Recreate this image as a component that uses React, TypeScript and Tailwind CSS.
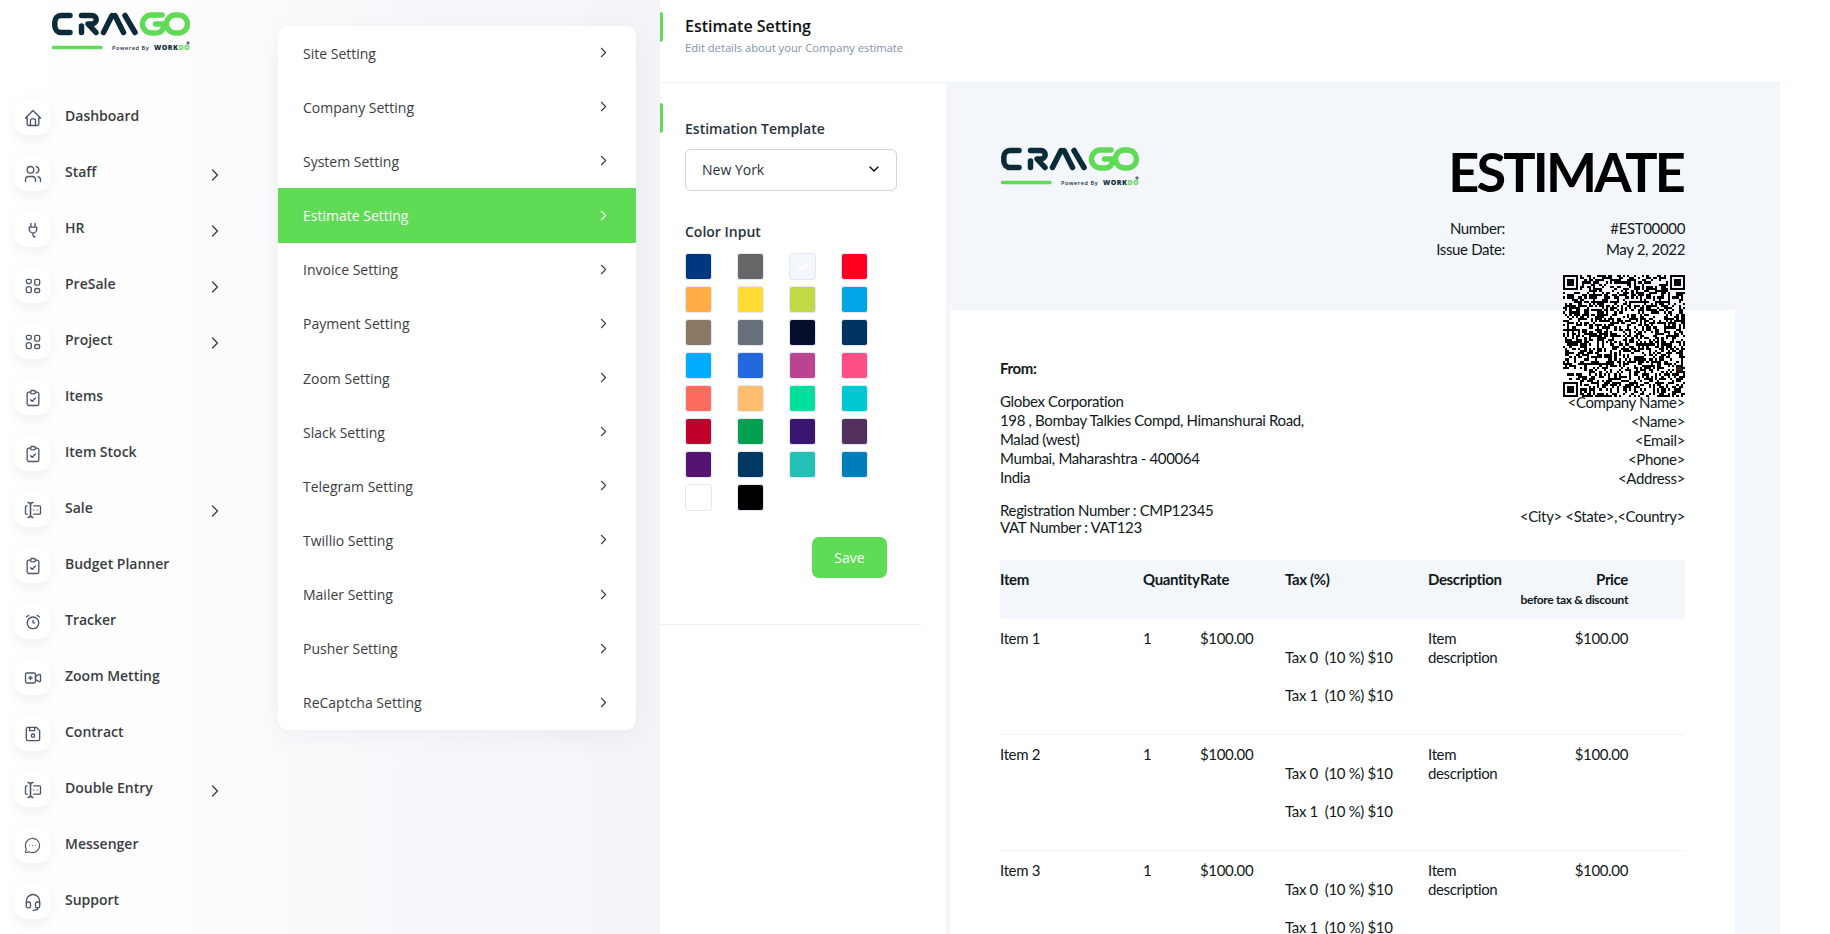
import {
  TbHome,
  TbUsers,
  TbLayout2,
  TbClipboardCheck,
  TbForms,
  TbAlarm,
  TbVideoPlus,
  TbDeviceFloppy,
  TbHeadset,
  TbChevronRight,
  TbChevronDown,
  TbCheck,
} from "react-icons/tb";
import { MessageCircleMore } from "lucide-react";
import type { ReactNode } from "react";

const iconCls = "w-[20px] h-[20px] text-[#4a5568]";
const thin = 1.6;

function PlugIcon() {
  return (
    <svg viewBox="0 0 24 24" fill="none" stroke="currentColor" strokeWidth={thin} strokeLinecap="round" strokeLinejoin="round" className={iconCls}>
      <path d="M9.5 4v4.5M14.5 4v4.5M7.5 8.5h9v2.5a4.5 4.5 0 0 1-9 0zM12 15.5v2.5a2 2 0 0 0 2.5 2" />
    </svg>
  );
}

const menu: { label: string; icon: ReactNode; arrow?: boolean }[] = [
  { label: "Dashboard", icon: <TbHome strokeWidth={thin} className={iconCls} /> },
  { label: "Staff", icon: <TbUsers strokeWidth={thin} className={iconCls} />, arrow: true },
  { label: "HR", icon: <PlugIcon />, arrow: true },
  { label: "PreSale", icon: <TbLayout2 strokeWidth={thin} className={iconCls} />, arrow: true },
  { label: "Project", icon: <TbLayout2 strokeWidth={thin} className={iconCls} />, arrow: true },
  { label: "Items", icon: <TbClipboardCheck strokeWidth={thin} className={iconCls} /> },
  { label: "Item Stock", icon: <TbClipboardCheck strokeWidth={thin} className={iconCls} /> },
  { label: "Sale", icon: <TbForms strokeWidth={thin} className={iconCls} />, arrow: true },
  { label: "Budget Planner", icon: <TbClipboardCheck strokeWidth={thin} className={iconCls} /> },
  { label: "Tracker", icon: <TbAlarm strokeWidth={thin} className={iconCls} /> },
  { label: "Zoom Metting", icon: <TbVideoPlus strokeWidth={thin} className={iconCls} /> },
  { label: "Contract", icon: <TbDeviceFloppy strokeWidth={thin} className={iconCls} /> },
  { label: "Double Entry", icon: <TbForms strokeWidth={thin} className={iconCls} />, arrow: true },
  { label: "Messenger", icon: <MessageCircleMore strokeWidth={1.6} className="w-[17px] h-[17px] text-[#4a5568]" /> },
  { label: "Support", icon: <TbHeadset strokeWidth={thin} className={iconCls} /> },
];

const settings = [
  "Site Setting",
  "Company Setting",
  "System Setting",
  "Estimate Setting",
  "Invoice Setting",
  "Payment Setting",
  "Zoom Setting",
  "Slack Setting",
  "Telegram Setting",
  "Twillio Setting",
  "Mailer Setting",
  "Pusher Setting",
  "ReCaptcha Setting",
];

const swatches = [
  "#003580", "#666666", "#f3f6fb", "#ff0022",
  "#ffad45", "#ffdb33", "#c1d944", "#00a5e6",
  "#8a7864", "#67707a", "#050f2c", "#003362",
  "#00adff", "#2468e0", "#b9448f", "#ff4d85",
  "#ff6a5f", "#ffbd6f", "#00e09a", "#00c8d2",
  "#c2002c", "#00a04e", "#3a1670", "#54305c",
  "#541470", "#003864", "#24bfb5", "#007dbb",
  "#ffffff", "#000000",
];

function Logo() {
  return (
    <svg width="138" height="40" viewBox="0 0 138 40" fill="none" strokeLinecap="round" strokeLinejoin="round" className="block">
      <g stroke="#0b2b3b" strokeWidth="5.5">
        <path d="M18 3.5H9A6.5 6.5 0 0 0 2.8 10v4A6.5 6.5 0 0 0 9 20.5H18" />
        <path d="M29.5 20.5V14M29.5 3.5H40a3.6 3.6 0 0 1 0 8.4H36L44 20.5" />
        <path d="M51.5 20.5L60 3.5M63 3.5L71.5 20.5M73 3.5L83 20.5" />
      </g>
      <g stroke="#5fdb55" strokeWidth="5.5">
        <path d="M110 3H99.5a9 9 0 0 0 0 18h5a7 7 0 0 0 7-7V12h-8" />
        <rect x="114.5" y="3" width="21" height="18" rx="9" />
      </g>
      <path d="M1.5 35.5H49" stroke="#5fdb55" strokeWidth="3.5" />
      <path d="M136 29.5v3M134.5 31h3" stroke="#0b2b3b" strokeWidth="0.8" />
      <text x="60" y="37.5" fontSize="5.5" letterSpacing="0.6" fill="#0b2b3b" fontFamily="Open Sans, sans-serif" fontWeight="600">
        Powered By
      </text>
      <text x="102" y="37.5" fontSize="7" letterSpacing="0.5" fill="#0b2b3b" fontFamily="Open Sans, sans-serif" fontWeight="800">
        WORK<tspan fill="#5fdb55">DO</tspan>
      </text>
    </svg>
  );
}

// fake QR: finder squares plus a seeded noise pattern
function QrCode() {
  const n = 57;
  let seed = 20220502;
  const next = () => {
    seed = (seed * 1103515245 + 12345) & 0x7fffffff;
    return (seed >> 16) & 1;
  };
  const inFinder = (x: number, y: number) =>
    (x < 8 && y < 8) || (x >= n - 8 && y < 8) || (x < 8 && y >= n - 8);
  let d = "";
  for (let y = 0; y < n; y++) {
    for (let x = 0; x < n; x++) {
      if (!inFinder(x, y) && next()) d += `M${x} ${y}h1v1h-1z`;
    }
  }
  const finder = (x: number, y: number) =>
    `M${x} ${y}h7v7h-7zM${x + 1} ${y + 1}v5h5v-5zM${x + 2} ${y + 2}h3v3h-3z`;
  d += finder(0, 0) + finder(n - 7, 0) + finder(0, n - 7);
  return (
    <svg width="122" height="122" viewBox={`0 0 ${n} ${n}`} shapeRendering="crispEdges" className="block">
      <path d={d} fill="#000" fillRule="evenodd" />
    </svg>
  );
}

const cols = "grid grid-cols-[143px_57px_85px_143px_90px_110px]";

function InvoiceRow({ name }: { name: string }) {
  return (
    <div className={`${cols} h-[116px] pt-[10px] border-b border-[#f1f3f5] leading-[19px]`}>
      <div>{name}</div>
      <div>1</div>
      <div>$100.00</div>
      <div className="pt-[19px] whitespace-nowrap">
        <p>Tax 0&nbsp;&nbsp;(10 %) $10</p>
        <p className="mt-[19px]">Tax 1&nbsp;&nbsp;(10 %) $10</p>
      </div>
      <div>
        Item
        <br />
        description
      </div>
      <div className="text-right">$100.00</div>
    </div>
  );
}

export default function App() {
  return (
    <div className="flex w-[1830px] h-[934px] overflow-hidden font-['Open_Sans',sans-serif] bg-gradient-to-r from-[#f5f5fb] to-white">
      <div className="flex w-[660px] shrink-0 bg-gradient-to-r from-white via-[#fbfbfd] via-40% to-[#f3f3f9]">
        <aside className="w-[278px] shrink-0">
          <div className="pl-[52px] pt-[12px] h-[100px]">
            <Logo />
          </div>
          <nav className="flex flex-col gap-[21px] pl-[15px]">
            {menu.map((m) => (
              <div key={m.label} className="flex items-center h-[35px]">
                <span className="flex items-center justify-center w-[35px] h-[35px] rounded-[10px] bg-white shadow-[0_4px_14px_rgba(30,40,80,0.07)]">
                  {m.icon}
                </span>
                <span className="ml-[15px] w-[142px] text-[14px] font-semibold text-[#3a3d42] -mt-[5px]">{m.label}</span>
                {m.arrow && <TbChevronRight strokeWidth={1.5} className="w-[20px] h-[20px] ml-[-2px] mt-[2px] text-[#3a3d42]" />}
              </div>
            ))}
          </nav>
        </aside>
        <div className="pt-[26px]">
          <div className="w-[358px] bg-white rounded-[10px] overflow-hidden shadow-[0_6px_24px_rgba(30,40,80,0.05)]">
            {settings.map((s) => {
              const active = s === "Estimate Setting";
              return (
                <div
                  key={s}
                  className={`flex items-center justify-between h-[54.17px] pl-[25px] pr-[24px] text-[14px] ${
                    active ? "bg-[#5fdb55] text-white" : "text-[#3a3d42]"
                  }`}
                >
                  <span>{s}</span>
                  <TbChevronRight strokeWidth={1.5} className="w-[17px] h-[17px] -mt-[1px]" />
                </div>
              );
            })}
          </div>
        </div>
      </div>

      <main className="w-[1120px] shrink-0 flex flex-col bg-white">
        <header className="relative h-[83px] shrink-0 pl-[25px] pt-[14px] border-b border-[#eef0f4]">
          <span className="absolute left-0 top-[12px] w-[3px] h-[30px] rounded-r bg-[#5fdb55]" />
          <h1 className="text-[16px] leading-[24px] font-semibold text-[#111]">Estimate Setting</h1>
          <p className="text-[11.2px] leading-[20px] text-[#8392a5]">Edit details about your Company estimate</p>
        </header>
        <div className="flex flex-1 min-h-0">
          <section className="relative w-[286px] shrink-0">
            <span className="absolute left-0 top-[20px] w-[3px] h-[30px] rounded-r bg-[#5fdb55]" />
            <div className="w-[262px] pl-[25px] pt-[35px] h-[542px] border-b border-[#eef0f4]">
              <label className="block text-[14px] leading-[22px] font-semibold text-[#293240]">Estimation Template</label>
              <div className="mt-[9px] flex items-center justify-between w-[212px] h-[42px] pl-[16px] pr-[14px] pb-[2px] border border-[#ced4da] rounded-[6px] text-[14px] text-[#293240]">
                New York
                <TbChevronDown className="w-[16px] h-[16px] text-black" />
              </div>
              <label className="block mt-[30px] text-[14px] leading-[22px] font-semibold text-[#293240]">Color Input</label>
              <div className="mt-[10px] grid grid-cols-[repeat(4,27px)] gap-x-[25px] gap-y-[6px]">
                {swatches.map((c, i) => (
                  <span
                    key={i}
                    style={{ backgroundColor: c }}
                    className="flex items-center justify-center w-[27px] h-[27px] rounded-[3px] border border-[#e4e7f7]"
                  >
                    {i === 2 && <TbCheck className="w-[13px] h-[13px] text-white" strokeWidth={4} />}
                  </span>
                ))}
              </div>
              <div className="mt-[26px] ml-[127px] flex items-center justify-center w-[75px] h-[41px] rounded-[7px] bg-[#5fdb55] text-[14px] text-white">
                Save
              </div>
            </div>
          </section>

          <section className="flex-1 bg-[#f3f6fb] pl-[4px] pr-[45px] pt-[13px] overflow-hidden font-['Lato',sans-serif] text-[15px] tracking-[-0.35px] text-[#101820]">
            <div className="flex justify-between h-[214px] pl-[51px] pr-[50px] pt-[51px]">
              <Logo />
              <div className="w-[300px] text-right">
                <h2 className="text-[54px] leading-[50px] font-bold tracking-[-2.8px] pr-[2px] text-black">ESTIMATE</h2>
                <div className="mt-[21px] leading-[21px]">
                  <div className="flex justify-between">
                    <span className="w-[120px]">Number:</span>
                    <span>#EST00000</span>
                  </div>
                  <div className="flex justify-between">
                    <span className="w-[120px]">Issue Date:</span>
                    <span>May 2, 2022</span>
                  </div>
                </div>
                <div className="relative mt-[15px] flex justify-end">
                  <QrCode />
                  <span className="absolute right-[3px] top-[91px] w-[6px] h-[6px] rounded-full bg-[#3a1d10]" />
                </div>
              </div>
            </div>

            <div className="bg-white px-[50px] h-[700px]">
              <div className="flex justify-between leading-[19px]">
                <div className="pt-[49px]">
                  <p className="font-bold">From:</p>
                  <p className="mt-[14px]">
                    Globex Corporation
                    <br />
                    198 , Bombay Talkies Compd, Himanshurai Road,
                    <br />
                    Malad (west)
                    <br />
                    Mumbai, Maharashtra - 400064
                    <br />
                    India
                  </p>
                  <p className="mt-[15px] leading-[17px]">
                    Registration Number : CMP12345
                    <br />
                    VAT Number : VAT123
                  </p>
                </div>
                <div className="pt-[83px] text-right">
                  &lt;Company Name&gt;
                  <br />
                  &lt;Name&gt;
                  <br />
                  &lt;Email&gt;
                  <br />
                  &lt;Phone&gt;
                  <br />
                  &lt;Address&gt;
                  <br />
                  <br />
                  &lt;City&gt; &lt;State&gt;,&lt;Country&gt;
                </div>
              </div>

              <div className={`mt-[24px] ${cols} h-[59px] pt-[10px] bg-[#f3f6fb] font-bold leading-[19px]`}>
                <div>Item</div>
                <div>Quantity</div>
                <div>Rate</div>
                <div>Tax (%)</div>
                <div>Description</div>
                <div className="text-right whitespace-nowrap">
                  Price
                  <br />
                  <span className="text-[12px] leading-[21px]">before tax &amp; discount</span>
                </div>
              </div>
              <InvoiceRow name="Item 1" />
              <InvoiceRow name="Item 2" />
              <InvoiceRow name="Item 3" />
            </div>
          </section>
        </div>
      </main>
    </div>
  );
}
